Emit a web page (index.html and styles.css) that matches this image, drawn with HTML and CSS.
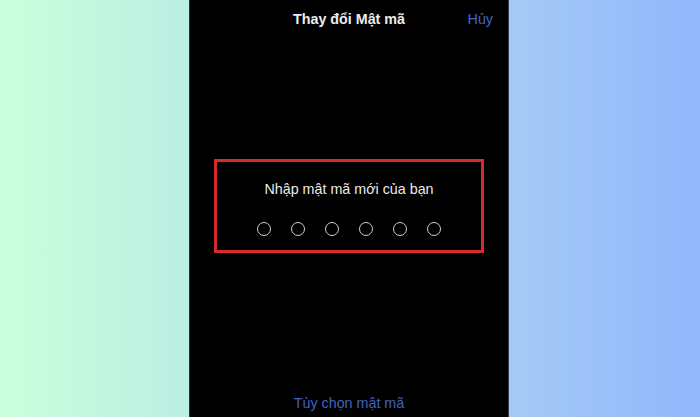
FILE: index.html
```html
<!DOCTYPE html>
<html lang="vi">
<head>
<meta charset="utf-8">
<title>Thay đổi Mật mã</title>
<link rel="stylesheet" href="styles.css">
</head>
<body>
<div class="stage">
  <div class="phone">
    <header class="nav">
      <span class="nav-title">Thay đổi Mật mã</span>
      <span class="nav-cancel">Hủy</span>
    </header>
    <section class="entry">
      <p class="entry-label">Nhập mật mã mới của bạn</p>
      <div class="dots">
        <span class="dot"></span>
        <span class="dot"></span>
        <span class="dot"></span>
        <span class="dot"></span>
        <span class="dot"></span>
        <span class="dot"></span>
      </div>
    </section>
    <footer class="options">Tùy chọn mật mã</footer>
  </div>
</div>
</body>
</html>
```

FILE: styles.css
```css
html, body {
  margin: 0;
  padding: 0;
}
body {
  width: 700px;
  height: 417px;
  overflow: hidden;
  background: linear-gradient(90deg, #ccffdb 0%, #bbeee2 27%, #a4caf5 73%, #93b6fd 100%);
  font-family: "Liberation Sans", Arial, sans-serif;
}
.stage {
  display: flex;
  padding-left: 189px;
  height: 417px;
}
.phone {
  width: 320px;
  height: 417px;
  box-sizing: border-box;
  background: #000;
  border-left: 1px solid #2a2f33;
  border-right: 1px solid #3a4250;
  display: flex;
  flex-direction: column;
  align-items: center;
}
.nav {
  position: relative;
  width: 100%;
  padding-top: 10px;
  height: 18px;
  display: flex;
  justify-content: center;
}
.nav-title {
  color: #ececec;
  font-size: 14.3px;
  line-height: 18px;
  font-weight: 700;
}
.nav-cancel {
  position: absolute;
  right: 15px;
  top: 10px;
  color: #4464c8;
  font-size: 14.3px;
  line-height: 18px;
}
.entry {
  margin-top: 131px;
  width: 270px;
  box-sizing: border-box;
  border: 3px solid #d62b2b;
  padding: 18px 0 14px;
  display: flex;
  flex-direction: column;
  align-items: center;
}
.entry-label {
  margin: 0;
  color: #ebebeb;
  font-size: 14.3px;
  line-height: 18px;
}
.dots {
  margin-top: 24px;
  display: flex;
  gap: 20px;
}
.dot {
  width: 14px;
  height: 14px;
  box-sizing: border-box;
  border: 1.5px solid #cfcfcf;
  border-radius: 50%;
}
.options {
  margin-top: auto;
  margin-bottom: 5px;
  color: #4262c0;
  font-size: 14.3px;
  line-height: 18px;
}
```
